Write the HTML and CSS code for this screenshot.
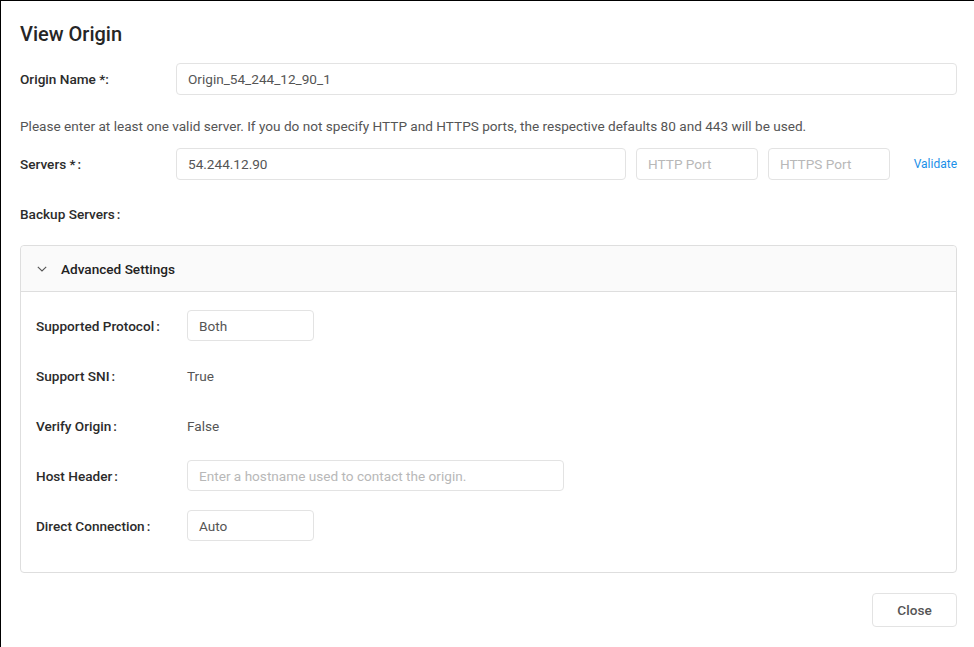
FILE: index.html
```html
<!DOCTYPE html>
<html>
<head>
<meta charset="utf-8">
<link rel="stylesheet" href="styles.css">
</head>
<body>
<div class="dialog">
  <h1 class="title">View Origin</h1>
  <div class="row row-name">
    <label class="label">Origin Name *:</label>
    <div class="input grow">Origin_54_244_12_90_1</div>
  </div>
  <p class="help">Please enter at least one valid server. If you do not specify HTTP and HTTPS ports, the respective defaults 80 and 443 will be used.</p>
  <div class="row row-servers">
    <label class="label">Servers *<span class="colon">:</span></label>
    <div class="input server">54.244.12.90</div>
    <div class="input port placeholder">HTTP Port</div>
    <div class="input port placeholder">HTTPS Port</div>
    <a class="link">Validate</a>
  </div>
  <div class="row row-backup">
    <label class="label">Backup Servers<span class="colon">:</span></label>
  </div>
  <div class="panel">
    <div class="panel-head">
      <svg class="chev" width="10" height="6" viewBox="0 0 10 6"><path d="M0.8 0.8 L5 5 L9.2 0.8" fill="none" stroke="#555" stroke-width="1.1"/></svg>
      <span>Advanced Settings</span>
    </div>
    <div class="panel-body">
      <div class="prow"><label class="plabel">Supported Protocol<span class="colon">:</span></label><div class="input small">Both</div></div>
      <div class="prow"><label class="plabel">Support SNI<span class="colon">:</span></label><span class="value">True</span></div>
      <div class="prow"><label class="plabel">Verify Origin<span class="colon">:</span></label><span class="value">False</span></div>
      <div class="prow"><label class="plabel">Host Header<span class="colon">:</span></label><div class="input host placeholder">Enter a hostname used to contact the origin.</div></div>
      <div class="prow"><label class="plabel">Direct Connection<span class="colon">:</span></label><div class="input small">Auto</div></div>
    </div>
  </div>
  <div class="footer">
    <button class="btn">Close</button>
  </div>
</div>
</body>
</html>
```

FILE: styles.css
```css
* { box-sizing: border-box; }
html, body { margin: 0; padding: 0; background: #fff; }
body {
  font-family: Roboto, "Liberation Sans", Arial, sans-serif;
  color: #333;
  font-size: 13.6px;
  height: 647px;
  border-top: 1px solid #000;
  border-left: 1px solid #000;
}
.dialog {
  padding: 19px 17px 0 19px;
}
.title {
  margin: 0;
  font-size: 20px;
  font-weight: 500;
  line-height: 28px;
  color: #262626;
}
.row {
  display: flex;
  align-items: center;
}
.row-name { margin-top: 15px; }
.label {
  width: 156px;
  flex: none;
  font-weight: 500;
  color: #2b2b2b;
}
.colon { margin-left: 2px; }
.input {
  height: 32px;
  border: 1px solid #e3e3e3;
  border-radius: 4px;
  padding: 0 11px;
  display: flex;
  align-items: center;
  color: #555;
  background: #fff;
}
.placeholder { color: #b8b8b8; }
.grow { flex: 1; }
.help {
  margin: 22px 0 0;
  color: #555;
  line-height: 18px;
}
.row-servers { margin-top: 13px; }
.server { width: 451px; }
.port { width: 122px; margin-left: 10px; }
.link {
  margin-left: 24px;
  color: #1a8fe8;
  font-size: 12px;
}
.row-backup { margin-top: 18px; height: 32px; }
.panel {
  margin-top: 15px;
  border: 1px solid #dedede;
  border-radius: 4px;
}
.panel-head {
  height: 46px;
  background: #fafafa;
  border-bottom: 1px solid #dedede;
  display: flex;
  align-items: center;
  padding-left: 16px;
  font-weight: 500;
  color: #222;
  border-radius: 4px 4px 0 0;
}
.chev { margin-right: 14px; }
.panel-body {
  padding: 18px 15px 31px;
  display: flex;
  flex-direction: column;
  gap: 19px;
}
.prow {
  display: flex;
  align-items: center;
  height: 31px;
}
.plabel {
  width: 151px;
  flex: none;
  font-weight: 500;
  color: #2b2b2b;
}
.small { width: 127px; height: 31px; }
.host { width: 377px; height: 31px; }
.value { color: #555; }
.footer {
  display: flex;
  justify-content: flex-end;
  margin-top: 20px;
}
.btn {
  width: 85px;
  height: 34px;
  border: 1px solid #e3e3e3;
  border-radius: 4px;
  background: #fff;
  font-family: inherit;
  font-size: 13.6px;
  font-weight: 500;
  color: #555;
}
```
